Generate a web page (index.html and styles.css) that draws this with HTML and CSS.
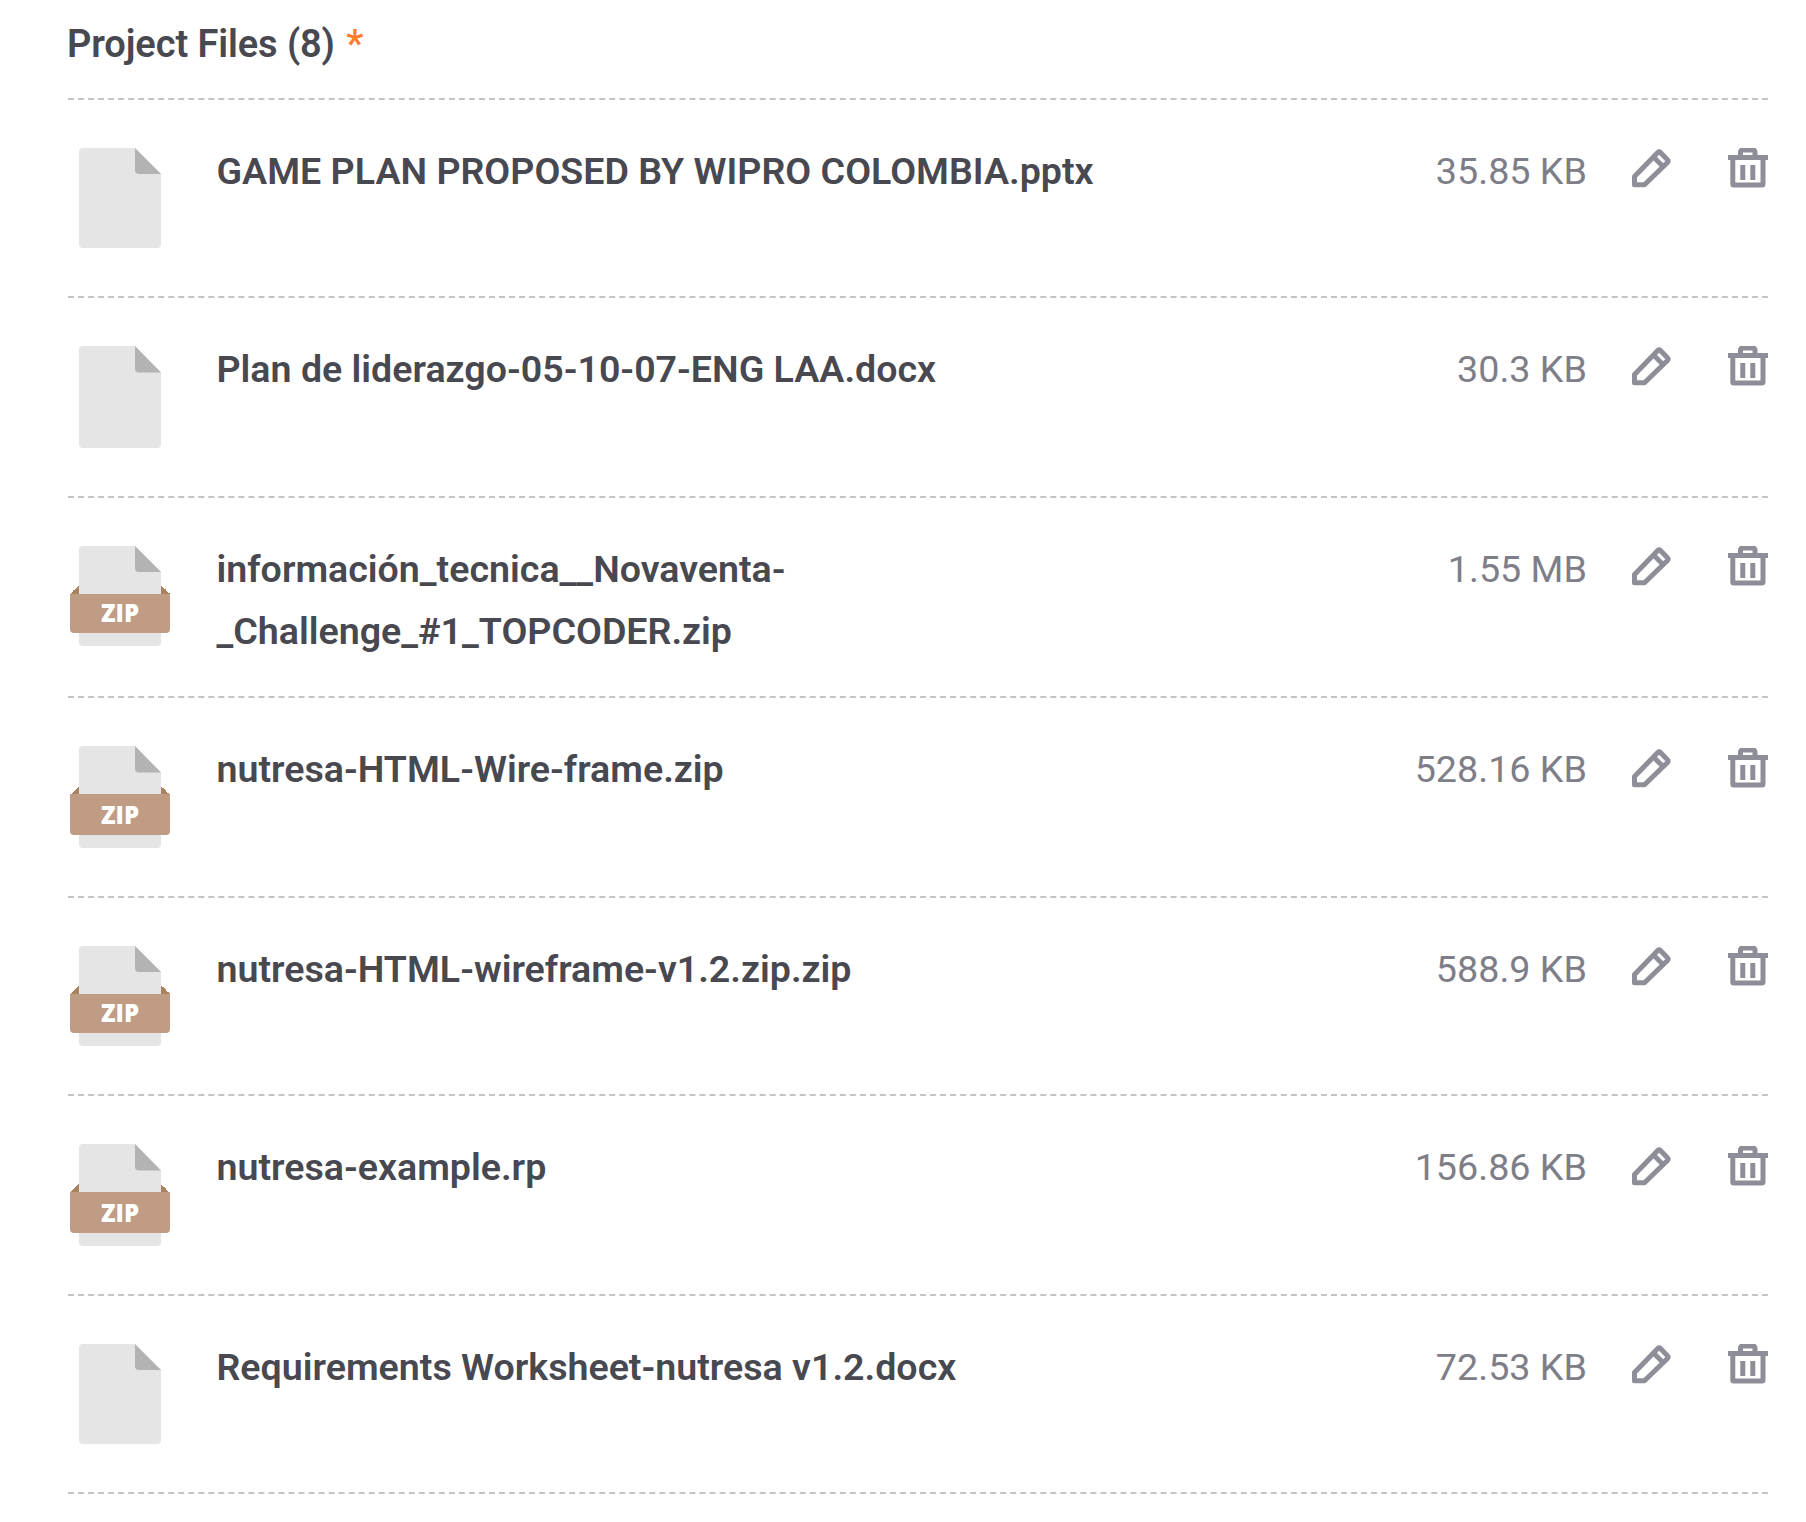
FILE: index.html
```html
<!DOCTYPE html>
<html lang="en">
<head>
    <meta charset="UTF-8">
    <meta name="viewport" content="width=device-width, initial-scale=1.0">
    <title>Project Files</title>
    <link rel="stylesheet" href="styles.css">
</head>
<body>
    <svg class="defs" width="0" height="0" aria-hidden="true">
        <symbol id="sheet" viewBox="0 0 100 100" preserveAspectRatio="none">
            <path d="M13 0H65L91 26V96a4 4 0 0 1-4 4H13a4 4 0 0 1-4-4V4a4 4 0 0 1 4-4z" fill="#e5e5e5"/>
            <path d="M65 0L91 26H69a4 4 0 0 1-4-4z" fill="#b3b3b3"/>
        </symbol>
        <symbol id="pencil" viewBox="0 0 40 40">
            <path d="M2.500 28.500L26 4.300a1.500 1.500 0 0 1 2.200 0L35.700 12a1.500 1.500 0 0 1 0 2.200L12.500 36.800H2.500z" fill="none" stroke="#8e8e98" stroke-width="5" stroke-linejoin="round"/>
            <path d="M21.500 9l9 9" fill="none" stroke="#8e8e98" stroke-width="5"/>
        </symbol>
        <symbol id="trash" viewBox="0 0 40 40">
            <path d="M0 9.500H40M4.800 10V36a1 1 0 0 0 1 1H34a1 1 0 0 0 1-1V10M12.500 10V4a2 2 0 0 1 2-2H25a2 2 0 0 1 2 2V10" fill="none" stroke="#8e8e98" stroke-width="5"/>
            <path d="M12.300 17h5v15h-5zM22.300 17h5v15h-5z" fill="#8e8e98"/>
        </symbol>
    </svg>

    <section class="files">
        <h2 class="files-title">Project Files (8) <span class="req">*</span></h2>

        <div class="file-row">
            <div class="file-icon">
                <svg class="sheet"><use href="#sheet"/></svg>
            </div>
            <div class="file-name">GAME PLAN PROPOSED BY WIPRO COLOMBIA.pptx</div>
            <div class="file-size">35.85 KB</div>
            <div class="actions">
                <svg class="act"><use href="#pencil"/></svg>
                <svg class="act"><use href="#trash"/></svg>
            </div>
        </div>

        <div class="file-row tall">
            <div class="file-icon big">
                <svg class="sheet"><use href="#sheet"/></svg>
            </div>
            <div class="file-name">Plan de liderazgo-05-10-07-ENG LAA.docx</div>
            <div class="file-size">30.3 KB</div>
            <div class="actions">
                <svg class="act"><use href="#pencil"/></svg>
                <svg class="act"><use href="#trash"/></svg>
            </div>
        </div>

        <div class="file-row tall">
            <div class="file-icon">
                <svg class="sheet"><use href="#sheet"/></svg>
                <div class="zip-flap"></div>
                <div class="zip-band">ZIP</div>
            </div>
            <div class="file-name">información_tecnica__Novaventa-<br>_Challenge_#1_TOPCODER.zip</div>
            <div class="file-size">1.55 MB</div>
            <div class="actions">
                <svg class="act"><use href="#pencil"/></svg>
                <svg class="act"><use href="#trash"/></svg>
            </div>
        </div>

        <div class="file-row tall">
            <div class="file-icon big">
                <svg class="sheet"><use href="#sheet"/></svg>
                <div class="zip-flap"></div>
                <div class="zip-band">ZIP</div>
            </div>
            <div class="file-name">nutresa-HTML-Wire-frame.zip</div>
            <div class="file-size">528.16 KB</div>
            <div class="actions low">
                <svg class="act"><use href="#pencil"/></svg>
                <svg class="act"><use href="#trash"/></svg>
            </div>
        </div>

        <div class="file-row">
            <div class="file-icon">
                <svg class="sheet"><use href="#sheet"/></svg>
                <div class="zip-flap"></div>
                <div class="zip-band">ZIP</div>
            </div>
            <div class="file-name">nutresa-HTML-wireframe-v1.2.zip.zip</div>
            <div class="file-size">588.9 KB</div>
            <div class="actions">
                <svg class="act"><use href="#pencil"/></svg>
                <svg class="act"><use href="#trash"/></svg>
            </div>
        </div>

        <div class="file-row tall">
            <div class="file-icon big">
                <svg class="sheet"><use href="#sheet"/></svg>
                <div class="zip-flap"></div>
                <div class="zip-band">ZIP</div>
            </div>
            <div class="file-name">nutresa-example.rp</div>
            <div class="file-size">156.86 KB</div>
            <div class="actions low">
                <svg class="act"><use href="#pencil"/></svg>
                <svg class="act"><use href="#trash"/></svg>
            </div>
        </div>

        <div class="file-row">
            <div class="file-icon">
                <svg class="sheet"><use href="#sheet"/></svg>
            </div>
            <div class="file-name">Requirements Worksheet-nutresa v1.2.docx</div>
            <div class="file-size">72.53 KB</div>
            <div class="actions">
                <svg class="act"><use href="#pencil"/></svg>
                <svg class="act"><use href="#trash"/></svg>
            </div>
        </div>
    </section>
</body>
</html>
```

FILE: styles.css
```css
body{
    margin: 0;
    background: #fff;
    font-family: Roboto, sans-serif;
    color: #484850;
}
.defs{
    position: absolute;
}
.files{
    padding: 19px 38px 0 68px;
}
.files-title{
    margin: 0;
    height: 79px;
    font-size: 38px;
    line-height: 50px;
    font-weight: 600;
    letter-spacing: -0.1px;
    text-indent: -1px;
    border-bottom: 2px dashed #c4c4c8;
}
.req{
    color: #ff7b2e;
    margin-left: 2px;
}
.file-row{
    display: flex;
    align-items: flex-start;
    box-sizing: border-box;
    height: 198px;
    padding-top: 40px;
    border-bottom: 2px dashed #c4c4c8;
}
.file-row.tall{
    height: 200px;
}
.file-icon{
    position: relative;
    flex: none;
    width: 100px;
    height: 100px;
    margin: 8px 46.500px 0 2px;
}
.file-icon.big{
    height: 102px;
}
.sheet{
    display: block;
    width: 100%;
    height: 100%;
}
.zip-flap{
    position: absolute;
    left: 0;
    right: 0;
    top: 39%;
    height: 9%;
    background: linear-gradient(135deg, transparent 50%, #a9825f 50%) left/9px 100% no-repeat,
                linear-gradient(225deg, transparent 50%, #a9825f 50%) right/9px 100% no-repeat;
}
.zip-band{
    position: absolute;
    left: 0;
    right: 0;
    top: 47.500%;
    height: 39.500%;
    background: #c09c85;
    border-radius: 0 0 4px 4px;
    color: #fff;
    font-family: "Open Sans", sans-serif;
    font-size: 24px;
    font-weight: 800;
    line-height: 38px;
    text-align: center;
}
.big .zip-band{
    line-height: 41px;
}
.file-name{
    flex: 1;
    font-size: 37.600px;
    font-weight: 600;
    line-height: 62px;
}
.file-size{
    flex: none;
    font-size: 37.700px;
    line-height: 62px;
    color: #7e7e88;
}
.actions{
    display: flex;
    gap: 56px;
    margin-left: 45px;
    padding-top: 8px;
}
.actions.low{
    padding-top: 10px;
}
.act{
    display: block;
    width: 40px;
    height: 40px;
}
```
